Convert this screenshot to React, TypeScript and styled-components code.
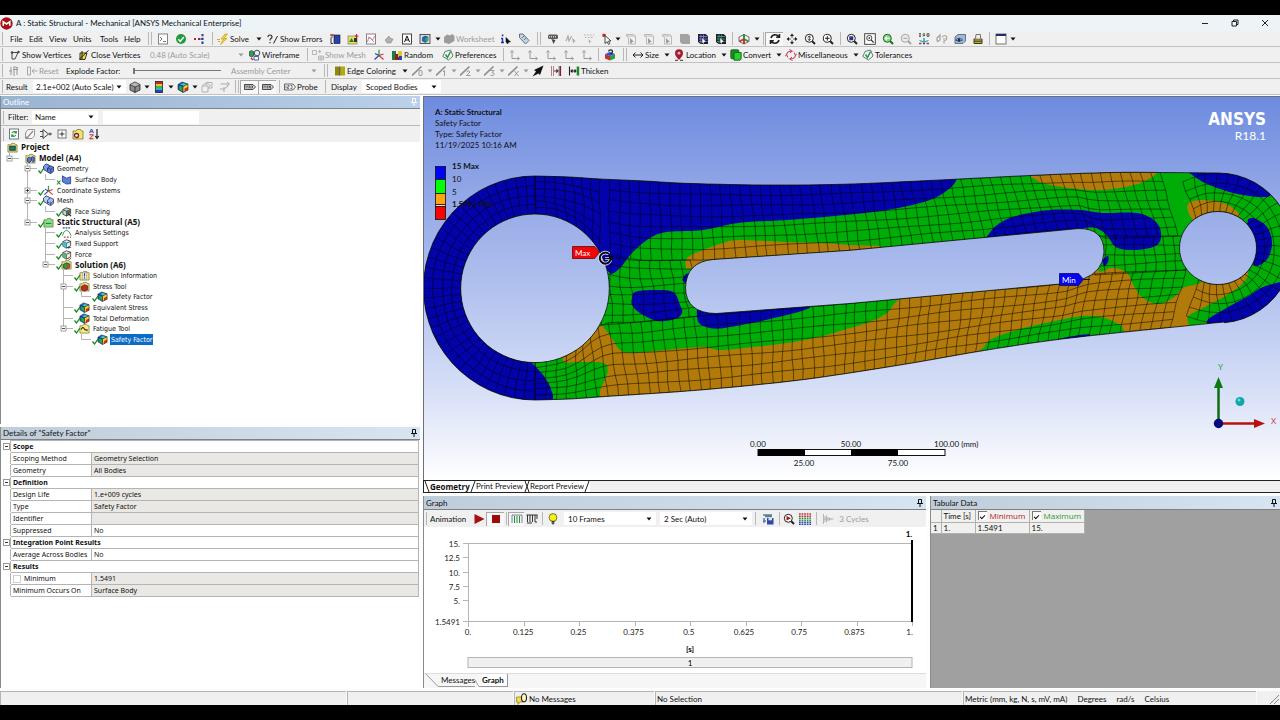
import React from 'react';
import styled, { createGlobalStyle, css } from 'styled-components';

const UI = `Lato, "Open Sans", sans-serif`;
const STRONG = `"Open Sans", "Noto Sans", sans-serif`;
const NARROW = `"DejaVu Sans Condensed", "DejaVu Sans", sans-serif`;
const GRID = `"Noto Sans", "Open Sans", sans-serif`;
const INK = '#101010';
const DIM = '#9b9b9b';

const GlobalStyle = createGlobalStyle`
  *, *::before, *::after { box-sizing: border-box; }
  html, body { margin: 0; padding: 0; }
  body { background: #000; color: ${INK}; font: 8px/10px ${UI}; }
  button, input, select { font: inherit; color: inherit; border: 0; padding: 0; margin: 0; background: none; border-radius: 0; }
  button { cursor: default; text-align: left; white-space: nowrap; }
  svg { display: block; flex: none; }
`;

/* ---------- icons ---------- */

const box = (fill: string, stroke = '#222') => (
  <>
    <path d="M2 4l4-2 4.500 1.500v5L6 11 2 9z" fill={fill} stroke={stroke} strokeWidth=".8" />
    <path d="M2 4l4 1.700 4.500-2M6 5.700V11" fill="none" stroke={stroke} strokeWidth=".8" />
  </>
);
const lens = (fill: string, stroke = '#222', extra: React.ReactNode = null) => (
  <>
    <path d="M8 8l3 3" stroke={stroke} strokeWidth="2" />
    <circle cx="5.300" cy="5.300" r="4" fill={fill} stroke={stroke} strokeWidth="1" />
    {extra}
  </>
);
const rainbow = (
  <>
    <path d="M1 3.500L5 1l6 2v6l-5 2.500-5-3z" fill="#1d62c9" />
    <path d="M3.500 3.500l3-1.300 4 1-2.500 2z" fill="#35d0c0" />
    <path d="M6 5.500l5-2.500v5.500L6 11.500z" fill="#ffd21f" />
    <path d="M7.500 7.500L11 6v2.500l-3.500 2z" fill="#e32b13" />
    <path d="M2.500 5l3 1v4l-3-1.500z" fill="#2ba82f" />
    <path d="M1 3.500L5 1l6 2v6l-5 2.500-5-3zM1 3.500l5 2L11 3M6 5.500v6" fill="none" stroke="#123" strokeWidth=".6" />
  </>
);
const folder = (fill: string, inner: React.ReactNode = null) => (
  <>
    <path d="M1 3h3l1-1.500h3.500L9.500 3H11v8H1z" fill={fill} stroke="#6b6425" strokeWidth=".7" />
    {inner}
  </>
);
const page = (stroke: string, inner: React.ReactNode) => (
  <>
    <rect x="1.500" y="1" width="9" height="10" fill="#fff" stroke={stroke} strokeWidth=".9" />
    {inner}
  </>
);
const axisL = (
  <path d="M3 2v7.500h7M1.500 3.500L3 1.500l1.500 2M8.500 8l2 1.500-2 1.500" fill="none" stroke="#9a9a9a" strokeWidth="1" />
);
const edgeMark = (m: React.ReactNode) => (
  <>
    <path d="M0 10.500L9.500 1.500" stroke="#8e8e8e" strokeWidth="1.700" />
    <g stroke="#8e8e8e" strokeWidth=".9" fill="none">{m}</g>
  </>
);
const dimCube = (
  <>
    <path d="M1.500 3V1.500h7L10.500 3v8h-7V4.500L1.500 3h8.500" fill="none" stroke="#b4b4b4" strokeWidth=".9" />
    <path d="M5 5l4 4H7.200l-.8 1.800L5 9.500z" fill="#9c9c9c" />
  </>
);
const meshCube = (front: string) => (
  <>
    <path d="M1 1h7.500L11 3v8H3.500L1 9z" fill="#1c2038" />
    <path d="M2 3.500h8.500M2 6h8.500M2 8.500h8.500M4 1.500v9M6.500 1.500v9" stroke={front} strokeWidth=".9" />
    <path d="M5 4.500L9.500 9H7.500l-.9 2L5 9.500z" fill="#fff" stroke="#111" strokeWidth=".5" />
  </>
);

const art: Record<string, React.ReactNode> = {
  app: (
    <>
      <circle cx="6" cy="6" r="5.700" fill="#a80f17" />
      <path d="M3 8V4.500l3 2 3-2V8" fill="none" stroke="#fff" strokeWidth="1.500" />
    </>
  ),
  script: page('#777', <path d="M3 4l2 2-2 2M6 8.500h3" fill="none" stroke="#666" strokeWidth=".9" />),
  ok: (
    <>
      <circle cx="6" cy="6" r="5" fill="#1f9a3c" />
      <path d="M3.300 6.200L5.300 8.300 8.800 4" fill="none" stroke="#fff" strokeWidth="1.500" />
    </>
  ),
  connect: (
    <>
      <path d="M1 6h3M5 6h2.500" stroke="#b22" strokeWidth="1.800" strokeDasharray="2 1" />
      <path d="M9.500 1v10" stroke="#223a9c" strokeWidth="2" strokeDasharray="2.300 1.500" />
      <path d="M6 6h4" stroke="#223a9c" strokeWidth="1" />
    </>
  ),
  bolt: (
    <>
      <path d="M8 1L4 6h2.500L3.500 11.500 10 5.500H7L10.500 1z" fill="#ffd61e" stroke="#a98200" strokeWidth=".5" />
      <path d="M0 6.500h3M1 8.500h2" stroke="#c89b00" strokeWidth=".8" />
    </>
  ),
  errors: (
    <>
      <path d="M1 4Q1 2 3 2T5 4Q5 5 3.900 5.600T3 7.500M3 9v1.300" fill="none" stroke="#222" strokeWidth="1.100" />
      <path d="M6.500 10.500L10.500 3" stroke="#222" strokeWidth="1" />
    </>
  ),
  report: (
    <>
      <rect x="5" y="2" width="6" height="8.500" fill="#2541b5" stroke="#111" strokeWidth=".6" />
      <path d="M1 2h4M2 4.500v6h2" stroke="#333" fill="none" strokeWidth="1" />
      <path d="M3 1v4" stroke="#c22" strokeWidth="1" />
    </>
  ),
  images: (
    <>
      <rect x="1" y="3" width="9" height="8" fill="#e5e35c" stroke="#666" strokeWidth=".6" />
      <path d="M2 9l2.500-4L7 9" fill="#3a7a33" />
      <path d="M7 5h3v4H7z" fill="#333" />
      <path d="M9.500 1v4M8 3h3.500" stroke="#c22" strokeWidth="1" />
    </>
  ),
  chartRed: page('#777', <path d="M2.500 9Q4 2 6 5.500T9.500 3M3 4q3 1 6 5" fill="none" stroke="#c46a8b" strokeWidth=".9" />),
  dimTool: <path d="M2 7l4-4 1 2 3 1-2 4H4z" fill="#b0b0b0" stroke="#8c8c8c" strokeWidth=".6" />,
  letter: page('#333', <path d="M3.500 9L6 3l2.500 6M4.500 7h3" fill="none" stroke="#111" strokeWidth="1" />),
  globe: (
    <>
      <rect x="1" y="1.500" width="10" height="9" fill="#cfdcf0" stroke="#333" strokeWidth=".8" />
      <path d="M3.500 4.500l2.500-1.500 3 1v3.500L6.500 9.500l-3-1.500z" fill="#2563c9" stroke="#123" strokeWidth=".5" />
      <path d="M6.500 5.500L9 4v3.500L6.500 9.500z" fill="#33b04a" />
    </>
  ),
  sheet: <path d="M1 4L4 1.500 7 2.500 9 1l2.500 2v5L6 11 1 9.500z" fill="#9b9b9b" />,
  info: (
    <>
      <path d="M2.500 5v4.500M1 9.500h3M1 5.500h1.500" stroke="#1d2fb5" strokeWidth="1.400" />
      <rect x="1.800" y="1.500" width="1.600" height="1.800" fill="#1d2fb5" />
      <path d="M6 4.500l4.500 4.500H8.500l-.8 2L6 9z" fill="#111" stroke="#111" strokeWidth=".6" />
    </>
  ),
  tag: (
    <>
      <path d="M1.500 1h3.500l6 6.500L7.500 11l-6-6.500z" fill="#c5d4e6" stroke="#456" strokeWidth=".8" />
      <path d="M4 5l2-2M6 7l2-2" stroke="#456" strokeWidth=".8" />
    </>
  ),
  wrench: (
    <>
      <rect x="1" y="1.500" width="10" height="4.500" rx="1.500" fill="#5a5a5a" />
      <path d="M2.500 3v1.500M4.500 3v1.500M6.500 3v1.500M8.500 3v1.500" stroke="#ddd" strokeWidth=".9" />
      <path d="M4.500 6l4 1-2 4z" fill="#444" />
    </>
  ),
  dimPick: (
    <>
      <path d="M1 8l2-5 1 5 2.500-5" fill="none" stroke="#aaa" strokeWidth="1.200" />
      <path d="M7 4.500l4 4H9L8.200 11z" fill="#aaa" />
    </>
  ),
  dimDots: (
    <>
      <path d="M1 2h10M2 4.500h8" stroke="#aaa" strokeWidth="1.200" strokeDasharray="1.500 1.500" />
      <path d="M5.500 6l3 3H7l-.8 2z" fill="#aaa" />
    </>
  ),
  pick: (
    <>
      <rect x="1.500" y=".8" width="3" height="3" fill="#c22" />
      <path d="M4 2.500l6 5.500H7.500l1.300 2.700-1.400.6-1.200-2.700L4 10.500z" fill="#fff" stroke="#222" strokeWidth=".8" />
    </>
  ),
  selV: dimCube,
  selB: <path d="M1 1h8l2 2v8H3L1 9z" fill="#a2a2a2" />,
  selN: meshCube('#8480d8'),
  selE: meshCube('#3f9a5c'),
  triad: (
    <>
      <path d="M1 4l5-2.500L11 4v4.500L6 11 1 8.500z" fill="#f4f4f4" stroke="#333" strokeWidth=".7" />
      <path d="M6 6V1M6 6l4.500 2.500" stroke="#1e9b35" strokeWidth="2" />
      <path d="M6 6L1.500 8.500M6 6v5" stroke="#cf2f2f" strokeWidth="2" />
    </>
  ),
  rotate: (
    <path d="M2 5Q3 1.800 6 1.800T9.700 4M10.500 1v3.300H7.200M10 7Q9 10.200 6 10.200T2.300 8M1.500 11V7.700h3.300" fill="none" stroke="#222" strokeWidth="1.600" />
  ),
  pan: (
    <>
      <path d="M6 2v8M2 6h8" stroke="#333" strokeWidth="1" strokeDasharray="2.700 2.600" />
      <path d="M6 .5L8 3H4zM6 11.500L4 9h4zM.5 6L3 4v4zM11.500 6L9 8V4z" fill="#222" />
    </>
  ),
  zoom: lens('#fff', '#222', <path d="M5.300 3v4.500M3.700 4.500L5.300 3l1.600 1.500M3.700 6l1.600 1.500L6.900 6" fill="none" stroke="#222" strokeWidth=".8" />),
  zoomPlus: lens('#fff', '#222', <path d="M3 5.300h4.600M5.300 3v4.600" stroke="#222" strokeWidth="1" />),
  zoomFit: lens('#fff', '#222', <rect x="3.300" y="3.300" width="4" height="4" fill="#2a3384" />),
  zoomBox: (
    <>
      <rect x=".7" y=".7" width="10.600" height="10.600" fill="#fff" stroke="#333" strokeWidth=".9" />
      <circle cx="5.300" cy="5" r="2.600" fill="#fff" stroke="#333" strokeWidth=".9" />
      <path d="M7.200 7l2.500 2.700M5.300 4v2" stroke="#333" strokeWidth="1.200" />
    </>
  ),
  zoomGreen: lens('#7fdc7f', '#1c6a24', <path d="M7.500 5.300h-4M5 3.700L3.300 5.300 5 7" fill="none" stroke="#fff" strokeWidth="1.200" />),
  zoomDim: lens('#ececec', '#a2a2a2', <path d="M3.300 5.300h4" stroke="#a2a2a2" strokeWidth="1" />),
  iso: (
    <>
      <path d="M1 .7h2M2 .7v2.600M1 3.300h2M7 1q-2-.8-2 .3t1.700.9-2 .9M9 .7h2v2.600H9z" fill="none" stroke="#333" strokeWidth=".8" />
      <path d="M6 5v4" stroke="#2a9b3c" strokeWidth="1.300" />
      <path d="M1.500 7.500L6 9l4.500-1.500" fill="none" stroke="#2ba0b8" strokeWidth="1.200" />
      <path d="M1 10.500h2.500M8.500 10.500H11" stroke="#c43333" strokeWidth="1.500" />
      <path d="M5 10.500h2" stroke="#2a42b8" strokeWidth="1.500" />
    </>
  ),
  lookDim: <path d="M1 8V5l3-3v5L1 9M6 4q3.500-3 4.500 0T8 8v2.500M7 6h2" fill="none" stroke="#a2a2a2" strokeWidth="1.200" />,
  eye: (
    <>
      <path d="M1 4l3-2.500h7.500V8L9 10.500H1z" fill="#9fb8d6" stroke="#45627f" strokeWidth=".8" />
      <path d="M1.500 7q3.500-3.500 7 0-3.500 3-7 0z" fill="#dde8f5" stroke="#1c2c4a" strokeWidth=".8" />
      <circle cx="5" cy="7" r="1.500" fill="#1c2c4a" />
    </>
  ),
  stack: (
    <>
      <rect x="1.500" y="5.500" width="9" height="5.500" rx="1" fill="#3c3a1c" />
      <path d="M2.500 7h7M2.500 9.200h7" stroke="#d9cf3c" strokeWidth="1.100" />
      <path d="M3.500 5.500L4 1.500h4.500v4" fill="#eee" stroke="#666" strokeWidth=".9" />
    </>
  ),
  windowIcon: (
    <>
      <rect x="1" y="1" width="10" height="10" fill="#fff" stroke="#555" strokeWidth=".8" />
      <rect x="1" y="1" width="10" height="2" fill="#222c66" />
    </>
  ),
  vertices: (
    <>
      <path d="M3 10V3.500h6.500M3 10h3l3-6.500" fill="none" stroke="#333" strokeWidth=".9" />
      <circle cx="3" cy="3.500" r="1.200" fill="#444" />
      <circle cx="9.500" cy="3" r="1.200" fill="#444" />
    </>
  ),
  closeV: (
    <>
      <path d="M2 4h7l-2 6.500H2z" fill="#f0dc3e" stroke="#222" strokeWidth=".9" />
      <path d="M1 10.500L10.500 1.500M4 2v8" stroke="#222" strokeWidth="1" />
    </>
  ),
  wire: (
    <>
      <path d="M0 3l2.500-1.500L5 3v3.500L2.500 8 0 6.500z" fill="#3e9950" stroke="#143" strokeWidth=".7" />
      <path d="M2 9l2 2" stroke="#b33" strokeWidth="1.500" />
      <circle cx="8" cy="4" r="2.800" fill="#e4f0f4" stroke="#223" strokeWidth=".8" />
      <path d="M5 7.500h4.500V11H5z" fill="#fff" stroke="#233a9c" strokeWidth=".8" />
    </>
  ),
  meshDim: (
    <>
      <path d="M.5 1.500h4v4h-4zM6.500 7h5v4h-5zM9 7v4M6.500 9h5" fill="none" stroke="#aaa" strokeWidth=".8" />
      <path d="M6 2.500h2.500M7 1l2 1.500-2 1.500" stroke="#aaa" fill="none" strokeWidth=".8" />
    </>
  ),
  axes: (
    <>
      <path d="M6 6.500V.8" stroke="#30a83e" strokeWidth="1.400" />
      <path d="M6 6.500L1.500 10.500M6 6.500L2 4.500" stroke="#2742b8" strokeWidth="1.200" />
      <path d="M6 6.500l4.500 4M6 6.500L10.500 5" stroke="#cc3b3b" strokeWidth="1.200" />
    </>
  ),
  random: (
    <>
      <rect x="1" y="2" width="4" height="9" fill="#1e7c3c" />
      <rect x="4" y="5" width="4" height="6" fill="#8a1f2a" />
      <rect x="7" y="2" width="4" height="6" fill="#e3c52a" />
      <rect x="8" y="7" width="3" height="4" fill="#2a3fae" />
    </>
  ),
  prefs: (
    <>
      <path d="M3 2.500L8.500 1l2.500 6-4.500 4L.8 7.500z" fill="#f1f8f3" stroke="#4c6f78" strokeWidth=".9" />
      <path d="M3.500 5.500L5.500 8.500 8.500 2.500" fill="none" stroke="#1f9a3c" strokeWidth="1.400" />
    </>
  ),
  axisL,
  cubeColor: (
    <>
      <path d="M1 5l5 2v4.500L1 9.500z" fill="#c92d2d" />
      <path d="M6 7l5-2v4.500l-5 2z" fill="#2d9e42" />
      <path d="M1 5l5-2 5 2-5 2z" fill="#2e54c8" />
      <path d="M4.500 2.500Q5 .8 6.700.8T8.500 2.400 7 4.500v.8" fill="none" stroke="#222" strokeWidth="1.300" />
    </>
  ),
  size: <path d="M1 6h10M3.500 3.500L1 6l2.500 2.500M8.500 3.500L11 6 8.500 8.500" fill="none" stroke="#222" strokeWidth="1" />,
  pin: (
    <>
      <path d="M6 .3q4 0 4 4Q10 7 6 11 2 7 2 4.300q0-4 4-4z" fill="#a31d2f" />
      <circle cx="6" cy="4.200" r="1.400" fill="#e8b8be" />
      <path d="M2 11.300h3M7 11.300h3" stroke="#333" strokeWidth="1" />
    </>
  ),
  convert: (
    <>
      <rect x=".8" y=".8" width="8" height="9" rx="1" fill="#1d8a26" stroke="#0d5312" strokeWidth=".8" />
      <path d="M4 4.500L5.500 3.500h5.700v6.500L10 11.200H4z" fill="#25d02f" stroke="#0d5312" strokeWidth=".8" />
    </>
  ),
  misc: (
    <>
      <path d="M1.500 6Q2 2.500 6 2M10.500 6Q10 9.500 6 10" fill="none" stroke="#c33b52" strokeWidth="1.100" />
      <path d="M4.500.5L7 2 5 4M7.500 11.500L5 10l2-2M9.300 4l1.200 2.500L12 4.500M2.700 8L1.500 5.500 0 7.500" fill="none" stroke="#c33b52" strokeWidth="1" />
      <path d="M7 2q2 .5 2.800 2.300M5 10Q3 9.500 2.200 7.700" fill="none" stroke="#c33b52" strokeWidth=".8" strokeDasharray="1 .8" />
    </>
  ),
  explodeDim: (
    <>
      <path d="M3 2v8M6 1v10M9 3v7" stroke="#b0b0b0" strokeWidth="1.400" />
      <path d="M1 6h3M5 4.500h5M7 2l3 1" stroke="#999" strokeWidth="1.200" />
    </>
  ),
  resetDim: <path d="M1.500 2h3v8h-3zM11.500 6H6M8.500 3.500L6 6l2.500 2.500" fill="none" stroke="#a8a8a8" strokeWidth="1" />,
  edge: (
    <>
      <rect x="1" y="1.500" width="4.500" height="9" fill="#8b8a0c" />
      <rect x="6" y="1.500" width="5" height="9" fill="#b0a910" />
      <path d="M5.700 1.500v9" stroke="#333" strokeWidth=".8" />
    </>
  ),
  e0: edgeMark(<rect x="7" y="5.500" width="3" height="5" rx="1" />),
  e1: edgeMark(<path d="M7 7l1.500-1.500v5.500" />),
  e2: edgeMark(<path d="M6.500 7q2-2.500 3.500 0L6.500 10.500h4" />),
  e3: edgeMark(<path d="M6.500 5.500h3.500L8 7.500q2.500 0 2 2t-3.500.7" />),
  ex: edgeMark(<path d="M6.500 6l4 5M10.500 6l-4 5" />),
  arrowNE: <path d="M.5 11.500l3.500-5-2-1.500L11.500.5 8 10 6.500 8.500z" fill="#111" />,
  gapIcon: (
    <>
      <path d="M1.500 1v10M3.500 1v10" stroke="#b08088" strokeWidth="1" />
      <path d="M4 6h4M6.300 4.300L8 6 6.300 7.700M10.500 1v10" fill="none" stroke="#7a2030" strokeWidth="1.200" />
      <path d="M9.200 1v10" stroke="#333" strokeWidth=".8" />
    </>
  ),
  thick: (
    <>
      <path d="M1.500 1.500v9M3 6h5M4.500 4.500L3 6l1.500 1.500M6.500 4.500L8 6 6.500 7.500" fill="none" stroke="#222" strokeWidth="1.100" />
      <rect x="8.700" y="1.500" width="2.500" height="9" fill="#1f8a2c" />
    </>
  ),
  cubeGray: (
    <>
      <path d="M1 3.500L6 1l5 2.500v5.500L6 11.500 1 9z" fill="#8c8c8c" stroke="#222" strokeWidth=".8" />
      <path d="M1 3.500L6 6l5-2.500M6 6v5.500" fill="none" stroke="#222" strokeWidth=".8" />
      <path d="M1.400 3.500L6 1.400l4.600 2.100L6 5.600z" fill="#b8b8b8" />
    </>
  ),
  bands: (
    <>
      <rect x="2.500" y=".5" width="7" height="2.500" fill="#c22" />
      <rect x="2.500" y="3" width="7" height="2" fill="#e6c82b" />
      <rect x="2.500" y="5" width="7" height="2" fill="#3eb548" />
      <rect x="2.500" y="7" width="7" height="2" fill="#2cb6c4" />
      <rect x="2.500" y="9" width="7" height="2.500" fill="#2540c2" />
      <rect x="2.500" y=".5" width="7" height="11" fill="none" stroke="#222" strokeWidth=".8" />
    </>
  ),
  rainbow,
  exportDim: <path d="M1 5h6v6H1zM1 5l2-2h4.500M5 3V1.500h6V7H7M7.500 3.500l2 1-2 1.500" fill="none" stroke="#aaa" strokeWidth=".9" />,
  flowDim: <path d="M1.500 3h8.500M8 1l2.500 2L8 5M1 8h4l4-3M5 6v5" fill="none" stroke="#aaa" strokeWidth="1" />,
  probe: (
    <>
      <path d="M.5 3h8.500l2.500 3L9 9H.5z" fill="#f4f4f4" stroke="#444" strokeWidth=".8" />
      <path d="M2 4.500v3M3.500 4.500h1.500v1.500H3.500v1.500h1.500M6.500 4.500H8v3H6.500" stroke="#444" strokeWidth=".7" fill="none" />
    </>
  ),
  maxTag: (
    <>
      <path d="M.5 3.500h8.500L11.500 6 9 8.500H.5z" fill="#ddd" stroke="#222" strokeWidth=".8" />
      <path d="M2 7.500v-3l1 1 1-1v3M5 7.500l.8-3 .8 3M7.500 4.500l1.500 3M9 4.500l-1.500 3" stroke="#222" strokeWidth=".6" fill="none" />
    </>
  ),
  minTag: (
    <>
      <path d="M.5 3.500h8.500L11.500 6 9 8.500H.5z" fill="#ddd" stroke="#222" strokeWidth=".8" />
      <path d="M2 7.500v-3l1 1 1-1v3M5.500 4.500v3M7 7.500v-3l1.500 3v-3" stroke="#222" strokeWidth=".6" fill="none" />
    </>
  ),
  refresh: page('#667', <path d="M4 5q2-2.500 4-.5M8 7q-2 2.500-4 .5M8.300 3v2H6.500M3.700 9V7h1.800" fill="none" stroke="#1f9a3c" strokeWidth="1.100" />),
  pagesDim: (
    <>
      <path d="M4 1.500h6.500V8L8 10.500H1.500V5z" fill="#f6f6f6" stroke="#8c8c8c" strokeWidth=".9" />
      <path d="M1.500 8.500L3 10l6-7" fill="none" stroke="#8c8c8c" strokeWidth="1.200" />
    </>
  ),
  expand: <path d="M0 3.500h3M0 8.500h3M3 1.500v9l5.500-4.500zM8.500 6H12M10 4.500v3" fill="none" stroke="#333" strokeWidth=".9" />,
  plusBox: (
    <>
      <rect x="2" y="2" width="8" height="8" fill="#fff" stroke="#555" strokeWidth=".8" />
      <path d="M3.500 6h5M6 3.500v5" stroke="#222" strokeWidth=".9" />
    </>
  ),
  hiddenFolder: folder('#efe56f', <circle cx="4.500" cy="7.500" r="2" fill="#fff" stroke="#7a1d1d" strokeWidth="1.300" />),
  sort: (
    <>
      <path d="M1.500 5L3.500 1l2 4M2.300 3.800h2.400" fill="none" stroke="#2a42b8" strokeWidth="1" />
      <path d="M1.500 6.800h4l-4 4h4" fill="none" stroke="#b22" strokeWidth="1" />
      <path d="M9 1v9M7.300 8L9 10.500 10.700 8" fill="none" stroke="#222" strokeWidth="1.200" />
    </>
  ),
  play: <path d="M1.500 1l10 5-10 5z" fill="#a80f0f" />,
  stop: <rect x="2" y="2" width="8" height="8" fill="#9c0b0b" />,
  barsG: (
    <>
      <path d="M1 10V2h10v8" fill="#eef8ee" stroke="#567" strokeWidth=".8" />
      <path d="M3.500 3v7M6 3v7M8.500 3v7" stroke="#2b8f3f" strokeWidth="1" />
    </>
  ),
  bars: <path d="M.5 2h11M1.500 2v7M4 2v7M6.500 2v7M9 2v7M11 2v4M1 10h5M10 10V8" stroke="#333" strokeWidth="1" fill="none" />,
  bulb: (
    <>
      <circle cx="6" cy="4.500" r="3.900" fill="#f7f01a" stroke="#5c5a10" strokeWidth=".8" />
      <path d="M4.500 8.500h3M4.500 10h3M6 8v3.500" stroke="#333" strokeWidth="1.200" />
    </>
  ),
  saveVideo: (
    <>
      <path d="M1 2h9M3 3.500h7M2 5v5M1 8h3" stroke="#5e7e98" strokeWidth="1.500" />
      <rect x="5" y="5" width="6.500" height="6.500" fill="#2a49a8" />
      <rect x="6.500" y="5" width="3.500" height="2.300" fill="#dfe8f8" />
    </>
  ),
  zoomPlay: lens('#fff', '#222', <path d="M3.500 3L8 5.300 3.500 7.600z" fill="#b31313" />),
  grid: (
    <g strokeWidth="1.500" strokeDasharray="1.700 .9">
      <path d="M0 1h12M0 3.200h12" stroke="#c42b3c" />
      <path d="M0 5.300h12M0 7.300h12" stroke="#2b9a3c" />
      <path d="M0 9.300h12M0 11.300h12" stroke="#2b3fb0" />
    </g>
  ),
  cyclesDim: <path d="M1.500 1v10M3 3v6M4.500 2.500v7M6 4v4M7.500 4.500v3M9 5.500v1M1 6h10.500" stroke="#b5b5b5" strokeWidth="1" />,
  note: (
    <>
      <path d="M.5 4h7v5H4l-2 2.500V9H.5z" fill="#f0dd4e" stroke="#8a7a10" strokeWidth=".7" />
      <ellipse cx="8" cy="4.700" rx="2.500" ry="4" fill="#fff8c0" stroke="#222" strokeWidth="1.100" />
    </>
  ),
  project: folder('#d8e08a', <rect x="3" y="4.500" width="6" height="4.500" fill="#1d7a5c" stroke="#123" strokeWidth=".8" />),
  model: folder('#e8e08c', <path d="M2.500 6l2-1.500L7 6v2.500l-2.500 2-2-1.500zM6.500 5l2-1 1.500 1v4L8 10" fill="#5c7ad8" stroke="#182c6b" strokeWidth=".9" />),
  geometry: (
    <>
      <path d="M.5 3.500L3.500 1l3.500 1.500v4L4 9 .5 7z" fill="#7c9ae6" stroke="#1a2a66" strokeWidth=".9" />
      <path d="M5 5.500L8 3l3.500 1.500v4.500l-3 2.500L5 10z" fill="#5f80d8" stroke="#1a2a66" strokeWidth=".9" />
      <path d="M5 5.500L8.500 7l3-2.500M8.500 7v4.500" fill="none" stroke="#1a2a66" strokeWidth=".7" />
    </>
  ),
  surface: <path d="M1.500 2L6 4.500 10.500 3v7.500L6 11 1.500 8.500z" fill="#5c80dc" stroke="#1c3078" strokeWidth=".8" />,
  meshT: (
    <>
      <path d="M.5 3.500L3.500 1l3.500 1.500v4L4 9 .5 7z" fill="#bccbf2" stroke="#1a2a66" strokeWidth=".9" />
      <path d="M5 5.500L8 3l3.500 1.500v4.500l-3 2.500L5 10zM5 8l3.500 1 3-2.500M8.500 7v4.500" fill="#a8bcf0" stroke="#1a2a66" strokeWidth=".8" />
    </>
  ),
  sizing: (
    <>
      {box('#c8d8d0')}
      <path d="M6 5.700l4-1.700v4L6 10z" fill="#4c6f50" />
      <path d="M8 8.500l3 2.500" stroke="#222" strokeWidth="1.300" />
    </>
  ),
  structural: folder('#7fe08a', <path d="M3 7h6" stroke="#1f7a2c" strokeWidth="1.100" />),
  settings: (
    <>
      <path d="M2 1h9" stroke="#2a42b8" strokeWidth="1.400" strokeDasharray="2 1" />
      <path d="M1.500 9.500Q3 3.500 6 3.500t5 6" fill="none" stroke="#2b9a3c" strokeWidth="1" />
      <path d="M3 11h8" stroke="#c33" strokeWidth="1.200" strokeDasharray="2 1.500" />
    </>
  ),
  support: (
    <>
      {box('#d8eef4')}
      <path d="M2 4l4 1.700V11L2 9z" fill="#3cc2d8" />
      <path d="M7 10.500h4M8 11.500l1-2" stroke="#222" strokeWidth=".8" />
    </>
  ),
  force: (
    <>
      {box('#e4efe6')}
      <path d="M2 4l4 1.700V11L2 9z" fill="#6fae78" />
      <path d="M8 10.500l1.500 1 1.500-2" stroke="#b22" fill="none" strokeWidth="1" />
    </>
  ),
  solution: folder('#e8e08c', (
    <>
      <path d="M2.500 6L6 4l3.500 1.500V9.500L6 11l-3.500-1.500z" fill="#2c9a40" stroke="#123" strokeWidth=".7" />
      <path d="M6 7l3.500-1.500v4L6 11z" fill="#c8471e" />
    </>
  )),
  solInfo: folder('#f5ea80', (
    <>
      <rect x="3.500" y="2.500" width="5" height="7.500" fill="#fff" stroke="#886" strokeWidth=".6" />
      <path d="M6 3.500v3.500M6 8v1.300" stroke="#223aa8" strokeWidth="1.500" />
    </>
  )),
  stress: folder('#e8e08c', <path d="M2.500 6L6 4l3.500 1.500V9.500L6 11l-3.500-1.500z" fill="#c22a1a" stroke="#411" strokeWidth=".7" />),
  fatigue: folder('#f5ea80', <path d="M2.500 7Q4 3.500 5.500 6T9.500 7.500" fill="none" stroke="#222" strokeWidth="1.200" />),
};

const Icon = ({ name, size = 12 }: { name: string; size?: number }) => (
  <svg width={size} height={size} viewBox="0 0 12 12" aria-hidden="true">{art[name]}</svg>
);

const Caret = ({ dim = false }: { dim?: boolean }) => (
  <svg width="6" height="4" viewBox="0 0 6 4" aria-hidden="true">
    <path d="M.5.500h5L3 3.500z" fill={dim ? '#9a9a9a' : '#111'} />
  </svg>
);

/* ---------- shell ---------- */

const Shell = styled.div`
  display: flex;
  flex-direction: column;
  min-width: 1040px;
  min-height: 100vh;
  padding: 15px 0;
  background: #000;
`;
const TitleBar = styled.header`
  display: flex;
  align-items: center;
  height: 16px;
  background: #edf4f8;
`;
const TitleText = styled.h1`
  flex: 1;
  margin: 0 0 0 3px;
  font: 8px/10px ${UI};
`;
const WindowButton = styled.button`
  width: 30px;
  height: 14px;
  display: grid;
  place-items: center;
`;
const Bar = styled.div`
  display: flex;
  align-items: center;
  height: 16px;
  background: #f0f0f0;
  border-bottom: 1px solid #c2c2c2;
`;
const Grip = styled.span<{ $w?: number }>`
  flex: none;
  width: ${p => p.$w ?? 10}px;
  height: 13px;
  padding-left: 2px;
  &::before { content: ''; display: block; width: 1px; height: 100%; background: #b5b5b5; }
`;
const Sep = styled.span<{ $w: number; $double?: boolean }>`
  flex: none;
  width: ${p => p.$w}px;
  height: 13px;
  display: flex;
  justify-content: center;
  &::before {
    content: '';
    width: ${p => (p.$double ? 4 : 1)}px;
    border: solid #b8b8b8;
    border-width: 0 ${p => (p.$double ? 1 : 0)}px 0 1px;
  }
`;
const Space = styled.span<{ $w: number }>`
  flex: none;
  width: ${p => p.$w}px;
`;
const Tool = styled.button<{ $w: number; $dim?: boolean; $on?: boolean }>`
  flex: none;
  display: flex;
  align-items: center;
  justify-content: center;
  width: ${p => p.$w}px;
  height: 14px;
  color: ${p => (p.$dim ? DIM : INK)};
  ${p => p.$on && css`
    background: #f8f8f8;
    border: solid #a8a8a8;
    border-width: 1px 0 0 1px;
  `}
`;
const Labelled = styled(Tool)`
  justify-content: flex-start;
  gap: 1px;
  padding-left: 1px;
`;
const MenuButton = styled.button<{ $w: number }>`
  flex: none;
  width: ${p => p.$w}px;
`;
const BarLabel = styled.label<{ $w: number }>`
  flex: none;
  width: ${p => p.$w}px;
  padding-left: 3px;
  white-space: nowrap;
`;
const ComboFrame = styled.span<{ $w: number; $flat?: boolean }>`
  flex: none;
  display: grid;
  align-items: center;
  width: ${p => p.$w}px;
  height: 13px;
  background: ${p => (p.$flat ? 'transparent' : '#fff')};
  & > * { grid-area: 1 / 1; }
  & > svg { justify-self: end; margin-right: 4px; pointer-events: none; }
`;
const ComboSelect = styled.select<{ $pad: number; $dim?: boolean }>`
  appearance: none;
  width: 100%;
  height: 13px;
  padding-left: ${p => p.$pad}px;
  color: ${p => (p.$dim ? DIM : INK)};
  opacity: 1;
`;
const Combo = ({ id, value, w, pad = 4, dim = false, label }: { id?: string; value: string; w: number; pad?: number; dim?: boolean; label?: string }) => (
  <ComboFrame $w={w} $flat={dim}>
    <ComboSelect id={id} $pad={pad} $dim={dim} disabled={dim} aria-label={label}>
      <option>{value}</option>
    </ComboSelect>
    <Caret dim={dim} />
  </ComboFrame>
);
const Slider = styled.input`
  appearance: none;
  width: 88px;
  height: 12px;
  margin: 0 4px 0 6px;
  background: linear-gradient(#777, #777) center / 100% 1px no-repeat;
  &::-webkit-slider-thumb { appearance: none; width: 2px; height: 6px; background: #777; }
`;

const T = ({ i, w = 18, dim, on }: { i: string; w?: number; dim?: boolean; on?: boolean }) => (
  <Tool $w={w} $dim={dim} $on={on} aria-label={i}><Icon name={i} /></Tool>
);
const L = ({ i, w, dim, children }: { i: string; w: number; dim?: boolean; children: React.ReactNode }) => (
  <Labelled $w={w} $dim={dim}><Icon name={i} />{children}</Labelled>
);
const C = ({ w = 8, dim }: { w?: number; dim?: boolean }) => (
  <Tool $w={w} aria-label="more"><Caret dim={dim} /></Tool>
);

const Toolbars = () => (
  <>
    <Bar as="nav">
      <Grip />
      <MenuButton $w={19}>File</MenuButton>
      <MenuButton $w={20}>Edit</MenuButton>
      <MenuButton $w={24}>View</MenuButton>
      <MenuButton $w={27}>Units</MenuButton>
      <MenuButton $w={24}>Tools</MenuButton>
      <MenuButton $w={22}>Help</MenuButton>
      <Sep $w={8} $double />
      <T i="script" /><T i="ok" /><T i="connect" />
      <Sep $w={8} />
      <L i="bolt" w={36}>Solve</L><C w={14} />
      <L i="errors" w={60}>Show Errors</L>
      <T i="report" /><T i="images" /><T i="chartRed" /><T i="dimTool" /><T i="letter" /><T i="globe" /><C />
      <L i="sheet" w={55} dim>Worksheet</L>
      <T i="info" /><T i="tag" />
      <Sep $w={11} $double />
      <T i="wrench" /><T i="dimPick" /><T i="dimDots" /><Space $w={2} /><T i="pick" w={14} /><C />
      <T i="selV" /><T i="selV" /><T i="selV" /><T i="selB" /><T i="selN" /><T i="selE" />
      <Sep $w={5} />
      <T i="triad" /><C />
      <Sep $w={4} />
      <T i="rotate" on /><T i="pan" /><T i="zoom" /><T i="zoomPlus" />
      <Sep $w={6} />
      <T i="zoomFit" /><T i="zoomBox" /><T i="zoomGreen" /><T i="zoomDim" /><T i="iso" /><T i="lookDim" /><T i="eye" /><T i="stack" />
      <Sep $w={5} />
      <T i="windowIcon" /><C w={6} />
    </Bar>
    <Bar>
      <Grip $w={8} />
      <L i="vertices" w={69}>Show Vertices</L>
      <L i="closeV" w={67}>Close Vertices</L>
      <Combo value="0.48 (Auto Scale)" w={104} pad={6} dim label="Vertex scale" />
      <L i="wire" w={56}>Wireframe</L>
      <Sep $w={7} />
      <L i="meshDim" w={59} dim>Show Mesh</L>
      <T i="axes" /><Space $w={2} />
      <L i="random" w={51}>Random</L>
      <L i="prefs" w={59}>Preferences</L>
      <Sep $w={6} />
      <T i="axisL" /><T i="axisL" /><T i="axisL" /><T i="axisL" /><T i="axisL" />
      <Sep $w={5} />
      <T i="cubeColor" />
      <Sep $w={12} $double />
      <L i="size" w={30}>Size</L><C w={11} />
      <L i="pin" w={47}>Location</L><C w={10} />
      <L i="convert" w={44}>Convert</L><C w={11} />
      <L i="misc" w={66}>Miscellaneous</L><C w={11} />
      <L i="prefs" w={60}>Tolerances</L>
    </Bar>
    <Bar>
      <Grip $w={5} />
      <T i="explodeDim" /><Space $w={2} />
      <L i="resetDim" w={38} dim>Reset</L>
      <BarLabel $w={64} htmlFor="explode">Explode Factor:</BarLabel>
      <Slider id="explode" type="range" min={0} max={10} defaultValue={0} />
      <Combo value="Assembly Center" w={96} pad={6} dim label="Explode centre" />
      <Sep $w={10} $double /><Space $w={2} />
      <L i="edge" w={67}>Edge Coloring</L><C w={9} />
      <T i="e0" /><C w={6} dim /><T i="e1" /><C w={6} dim /><T i="e2" /><C w={6} dim /><T i="e3" /><C w={6} dim /><T i="ex" /><C w={6} dim />
      <T i="arrowNE" /><T i="gapIcon" /><Space $w={2} />
      <L i="thick" w={60}>Thicken</L>
    </Bar>
    <Bar>
      <Grip $w={3} />
      <BarLabel $w={30} htmlFor="scale">Result</BarLabel>
      <Combo id="scale" value="2.1e+002 (Auto Scale)" w={93} pad={3} />
      <T i="cubeGray" /><C w={6} /><T i="bands" /><C w={6} /><T i="rainbow" /><C w={6} />
      <T i="exportDim" /><T i="flowDim" />
      <Sep $w={6} $double />
      <T i="maxTag" on /><T i="minTag" on />
      <Sep $w={7} />
      <L i="probe" w={40}>Probe</L>
      <Sep $w={5} />
      <BarLabel $w={34} htmlFor="display">Display</BarLabel>
      <Combo id="display" value="Scoped Bodies" w={79} />
    </Bar>
  </>
);

/* ---------- panels ---------- */

const Main = styled.main`
  flex: 1;
  display: grid;
  grid-template-columns: 420px minmax(0, 1fr);
  gap: 3px;
  padding: 1px 0 3px;
  background: #fdfdfd;
`;
const Column = styled.div`
  display: flex;
  flex-direction: column;
  gap: 3px;
  min-width: 0;
`;
const Panel = styled.section<{ $grow?: boolean }>`
  display: flex;
  flex-direction: column;
  min-width: 0;
  flex: ${p => (p.$grow ? 1 : 'none')};
  border-left: 1px solid #8a8a8a;
  background: #fff;
`;
const PanelHead = styled.div<{ $active?: boolean; $tall?: boolean }>`
  display: flex;
  align-items: center;
  justify-content: space-between;
  height: ${p => (p.$tall ? 14 : 13)}px;
  padding: 0 3px 0 2px;
  color: ${p => (p.$active ? '#fff' : INK)};
  background: ${p => (p.$active ? 'linear-gradient(90deg, #99b4d1, #b9d1ea)' : 'linear-gradient(90deg, #bfcddb, #d7e4f2)')};
  border-bottom: 1px solid #808080;
`;
const PanelTitle = styled.h2`
  margin: 0;
  font: 8px/10px ${UI};
`;
const PinButton = ({ light = false }: { light?: boolean }) => (
  <button aria-label="Pin panel">
    <svg width="6" height="8" viewBox="0 0 6 8">
      <path d="M1.500.500h3v4h-3zM0 4.500h6M3 4.500V8" fill="none" stroke={light ? '#fff' : '#111'} strokeWidth="1" />
    </svg>
  </button>
);
const FilterBar = styled.div`
  display: flex;
  align-items: center;
  height: 17px;
  background: #f0f0f0;
  border-bottom: 1px solid #b8b8b8;
`;
const TreeBar = styled(FilterBar)`
  height: 16px;
  border-bottom: 0;
`;
const FilterText = styled.input`
  width: 96px;
  height: 13px;
  margin-left: 5px;
  background: #fff;
`;

type Row = { t: string; icon: string; cells: string; bold?: boolean; check?: boolean; cross?: boolean; on?: boolean };

/* cells: one letter for each indent column. s blank, v line, t tee, e elbow, M minus box with line going on, P plus box, E last minus box */
const rows: Row[] = [
  { t: 'Project', icon: 'project', cells: '', bold: true },
  { t: 'Model (A4)', icon: 'model', cells: 'E', bold: true },
  { t: 'Geometry', icon: 'geometry', cells: 'sM', check: true },
  { t: 'Surface Body', icon: 'surface', cells: 'sve', cross: true },
  { t: 'Coordinate Systems', icon: 'axes', cells: 'sP', check: true },
  { t: 'Mesh', icon: 'meshT', cells: 'sM', check: true },
  { t: 'Face Sizing', icon: 'sizing', cells: 'sve', check: true },
  { t: 'Static Structural (A5)', icon: 'structural', cells: 'sE', bold: true, check: true },
  { t: 'Analysis Settings', icon: 'settings', cells: 'sst', check: true },
  { t: 'Fixed Support', icon: 'support', cells: 'sst', check: true },
  { t: 'Force', icon: 'force', cells: 'sst', check: true },
  { t: 'Solution (A6)', icon: 'solution', cells: 'ssE', bold: true, check: true },
  { t: 'Solution Information', icon: 'solInfo', cells: 'ssst', check: true },
  { t: 'Stress Tool', icon: 'stress', cells: 'sssM', check: true },
  { t: 'Safety Factor', icon: 'rainbow', cells: 'sssve', check: true },
  { t: 'Equivalent Stress', icon: 'rainbow', cells: 'ssst', check: true },
  { t: 'Total Deformation', icon: 'rainbow', cells: 'ssst', check: true },
  { t: 'Fatigue Tool', icon: 'fatigue', cells: 'sssE', check: true },
  { t: 'Safety Factor', icon: 'rainbow', cells: 'sssse', check: true, on: true },
];

const Tree = styled.ul`
  display: grid;
  grid-auto-rows: 1fr;
  height: 203px;
  margin: 0;
  padding: 0;
  list-style: none;
`;
const TreeRow = styled.li`
  display: flex;
  align-items: center;
  min-height: 0;
`;
const NodeButton = styled.button<{ $bold?: boolean; $on?: boolean }>`
  flex: none;
  display: block;
  padding: ${p => (p.$bold ? '0 1px' : '1px 1px 0')};
  font: ${p => (p.$bold ? `700 8px/10px ${STRONG}` : `400 7px/10px ${NARROW}`)};
  color: ${p => (p.$on ? '#fff' : INK)};
  background: ${p => (p.$on ? '#0a6cc4' : 'none')};
`;
const TreeCell = ({ k }: { k: string }) => {
  const boxed = k === 'M' || k === 'E' || k === 'P';
  return (
    <svg width="18" height="11" viewBox="0 0 18 11" aria-hidden="true">
      {k !== 's' && k !== 'v' && <path d="M8.500 5.500H18" stroke="#b4b4b4" />}
      {(k === 'v' || k === 't' || k === 'M' || k === 'P') && <path d="M8.500 0v11" stroke="#b4b4b4" />}
      {(k === 'e' || k === 'E') && <path d="M8.500 0v5.500" stroke="#b4b4b4" />}
      {boxed && <rect x="6" y="3" width="5" height="5" fill="#fff" stroke="#8a8a8a" strokeWidth=".8" />}
      {boxed && <path d={k === 'P' ? 'M7 5.500h3M8.500 4v3' : 'M7 5.500h3'} stroke="#222" strokeWidth=".8" />}
    </svg>
  );
};
const NodeIcon = ({ r }: { r: Row }) => (
  <svg width="19" height="11" viewBox="0 0 19 11" aria-hidden="true">
    <svg x="6" y="0" width="11" height="11" viewBox="0 0 12 12">{art[r.icon]}</svg>
    {r.check && <path d="M1.500 7.500l2 2.500 3.500-5" fill="none" stroke="#128a1c" strokeWidth="1.300" />}
    {r.cross && <path d="M2 6.500l3.500 4M5.500 6.500l-3.500 4" fill="none" stroke="#128a1c" strokeWidth="1.100" />}
  </svg>
);

const Outline = () => (
  <Panel $grow>
    <PanelHead $active><PanelTitle>Outline</PanelTitle><PinButton light /></PanelHead>
    <FilterBar>
      <Grip $w={4} />
      <BarLabel $w={27} htmlFor="filter">Filter:</BarLabel>
      <Combo id="filter" value="Name" w={66} pad={3} />
      <FilterText aria-label="Filter text" />
    </FilterBar>
    <TreeBar>
      <Grip $w={5} />
      <T i="refresh" w={16} /><T i="pagesDim" w={16} /><T i="expand" w={16} /><T i="plusBox" w={16} /><T i="hiddenFolder" w={16} /><T i="sort" w={16} />
    </TreeBar>
    <Tree>
      {rows.map((r, n) => (
        <TreeRow key={n}>
          {r.cells.split('').map((k, c) => <TreeCell key={c} k={k} />)}
          <NodeIcon r={r} />
          <NodeButton $bold={r.bold} $on={r.on}>{r.t}</NodeButton>
        </TreeRow>
      ))}
    </Tree>
  </Panel>
);

const DetailsPanel = styled(Panel)`
  height: 261px;
`;
const DetailTable = styled.table`
  width: 418px;
  border-collapse: collapse;
  table-layout: fixed;
  tr { height: 12px; }
  td, th {
    height: 12px;
    padding: 0 0 0 2px;
    border: 1px solid #b4b4b4;
    font: 7px/10px ${GRID};
    text-align: left;
    white-space: nowrap;
  }
`;
const Gutter = styled.td`
  && { width: 9px; padding: 0; border-color: #fff #b4b4b4 #fff #fff; background: #fff; }
`;
const Group = styled.th`
  && { font-weight: 700; }
`;
const Value = styled.td<{ $ro?: boolean }>`
  background: ${p => (p.$ro ? '#eae8e4' : '#fff')};
`;
const Toggle = styled.button`
  display: block;
  width: 7px;
  height: 7px;
  margin-left: 1px;
  border: 1px solid #9a9a9a;
  background: linear-gradient(#333, #333) center / 3px 1px no-repeat #fff;
`;
const Tick = styled.input`
  appearance: none;
  width: 8px;
  height: 8px;
  margin-right: 3px;
  border: 1px solid #cfcfcf;
  vertical-align: middle;
  background: #fff;
`;
type Detail = [string, string?, boolean?];
const details: Detail[] = [
  ['Scope'], ['Scoping Method', 'Geometry Selection', true], ['Geometry', 'All Bodies', true],
  ['Definition'], ['Design Life', '1.e+009 cycles', true], ['Type', 'Safety Factor', true], ['Identifier', '', true], ['Suppressed', 'No'],
  ['Integration Point Results'], ['Average Across Bodies', 'No'],
  ['Results'], ['Minimum', '1.5491', true], ['Minimum Occurs On', 'Surface Body', true],
];
const Details = () => (
  <DetailsPanel>
    <PanelHead><PanelTitle>Details of "Safety Factor"</PanelTitle><PinButton /></PanelHead>
    <DetailTable>
      <colgroup><col width="9" /><col width="81" /><col /></colgroup>
      <tbody>
        {details.map(([name, value, ro]) => (
          <tr key={name}>
            <Gutter>{value === undefined && <Toggle aria-label={`Collapse ${name}`} />}</Gutter>
            {value === undefined ? <Group colSpan={2}>{name}</Group> : (
              <>
                <td>{name === 'Minimum' ? <label><Tick type="checkbox" />{name}</label> : name}</td>
                <Value $ro={ro}>{value}</Value>
              </>
            )}
          </tr>
        ))}
      </tbody>
    </DetailTable>
  </DetailsPanel>
);

/* ---------- finite element part ---------- */

type P = [number, number];

/* Catmull-Rom sampling of a poly-line */
const sample = (pts: P[], t: number): P => {
  const n = pts.length - 1;
  const s = Math.min(Math.max(t, 0), 0.99999) * n;
  const i = Math.floor(s);
  const u = s - i;
  const at = (k: number) => pts[Math.min(Math.max(k, 0), n)];
  const f = (a: number, b: number, c: number, d: number) =>
    0.5 * (2 * b + (c - a) * u + (2 * a - 5 * b + 4 * c - d) * u * u + (3 * b - a - 3 * c + d) * u * u * u);
  const [a, b, c, d] = [at(i - 1), at(i), at(i + 1), at(i + 2)];
  return [f(a[0], b[0], c[0], d[0]), f(a[1], b[1], c[1], d[1])];
};
/* evenly spaced points along the curve */
const even = (pts: P[], n: number): P[] => {
  const fine: P[] = Array.from({ length: 401 }, (_, i) => sample(pts, i / 400));
  const len = [0];
  for (let i = 1; i < fine.length; i++) len.push(len[i - 1] + Math.hypot(fine[i][0] - fine[i - 1][0], fine[i][1] - fine[i - 1][1]));
  const total = len[400];
  let j = 0;
  return Array.from({ length: n + 1 }, (_, k) => {
    const want = (total * k) / n;
    while (j < 400 && len[j] < want) j++;
    return fine[j];
  });
};
const poly = (pts: P[]) => pts.map((p, i) => `${i ? 'L' : 'M'}${p[0].toFixed(1)} ${p[1].toFixed(1)}`).join('');
const smooth = (pts: P[]) => poly(Array.from({ length: pts.length * 8 + 1 }, (_, i) => sample(pts, i / (pts.length * 8))));
const arc = (cx: number, cy: number, rx: number, ry: number, a: number, b: number, n = 16): P[] =>
  Array.from({ length: n + 1 }, (_, i) => {
    const t = ((a + ((b - a) * i) / n) * Math.PI) / 180;
    return [cx + rx * Math.cos(t), cy + ry * Math.sin(t)];
  });
/* quad mesh between two curves */
const patch = (inner: P[], outer: P[], n: number, m: number, wobble = 1): string => {
  const a = even(inner, n);
  const b = even(outer, n);
  const g = a.map((p, i) => Array.from({ length: m + 1 }, (_, j): P => {
    const u = j / m;
    const k = j === 0 || j === m ? 0 : wobble;
    return [
      p[0] + (b[i][0] - p[0]) * u + k * Math.sin(i * 0.7 + j * 1.3),
      p[1] + (b[i][1] - p[1]) * u + k * Math.cos(i * 0.45 + j * 1.9),
    ];
  }));
  return g.map(poly).join('') + Array.from({ length: m + 1 }, (_, j) => poly(g.map(r => r[j]))).join('');
};

const topEdge: P[] = [[535, 176], [570, 177], [600, 179], [645, 181], [690, 183.5], [770, 185], [850, 184], [950, 179.5], [1030, 175.5], [1110, 172.5], [1160, 172.5], [1218, 173]];
const lowEdge: P[] = [[535, 400], [570, 399], [605, 396.5], [700, 390], [800, 380], [900, 365], [975, 352], [1050, 340.5], [1125, 332], [1170, 327.5], [1224, 322]];
const leftOuter = arc(535, 288, 111.5, 112, 90, 270, 30);
const rightOuter = arc(1218, 248, 75, 75, -90, 85, 24);
const body = `${poly([...even(topEdge, 60), ...rightOuter, ...even(lowEdge, 60).reverse(), ...leftOuter])}Z`;
const leftHole = `${poly(arc(535, 288.3, 74.3, 74.3, 0, 360, 72))}Z`;
const rightHole = `${poly(arc(1218, 248, 38.5, 36.5, 0, 360, 48))}Z`;
const slot = 'M713 259.500L850 250.300L1078 228.600Q1104 228 1104 252Q1103 272 1083 279Q1075 283 1060 284L850 303.500L716 313.500Q686 313 685.500 288Q686 262 713 259.500Z';

const mesh = [
  patch(arc(535, 288.3, 74.3, 74.3, 90, 270), arc(535, 288, 111.5, 112, 90, 270), 34, 4, 0.6),
  patch(arc(535, 288.3, 74.3, 74.3, 270, 330), topEdge.slice(0, 3), 7, 6, 1),
  patch([[610, 254], [640, 260], [690, 260], [713, 259.5], [850, 250.3], [960, 240], [1078, 228.6], [1105, 238], [1178, 236]], [[609, 179], ...topEdge.slice(3, 11)], 55, 7, 0.6),
  patch([[600, 252], [630, 260], [690, 260]], [[601, 325], [640, 322], [700, 316]], 9, 7, 1.2),
  patch([[535, 362.6], [570, 354], [601, 325], [640, 322], [700, 316], [850, 303.5], [960, 293], [1060, 284], [1095, 274], [1186, 270]], lowEdge.slice(0, 10), 62, 7, 0.7),
  patch([[1096, 236], [1182, 236]], [[1095, 275], [1186, 270]], 9, 4, 1),
  patch(arc(1218, 248, 38.5, 36.5, -125, 120), arc(1218, 248, 75, 75, -118, 115), 26, 4, 0.8),
].join('');

const blue: P[][] = [
  [[532, 363], [543, 375], [550.5, 388], [551.5, 402], [530, 420], [410, 380], [400, 180], [480, 150], [700, 160], [960, 160], [957, 178], [950, 188], [930, 200], [893, 209], [850, 214.5], [787, 220], [740, 222.7], [703, 230], [667, 232], [650, 238], [633, 252], [620, 268], [611, 274], [606, 270], [560, 240], [500, 240], [480, 330], [532, 363]],
  [[632, 298], [635, 292], [653, 290], [673, 292], [680, 305], [682, 313], [675, 319], [657, 321], [640, 313], [632, 305], [632, 298]],
  [[697, 308], [697, 316], [700, 324], [713, 328.5], [730, 327], [770, 319], [810, 307], [760, 305], [697, 308]],
  [[986, 238], [997, 225], [1017, 215.7], [1050, 210], [1080, 210], [1103, 213], [1137, 213], [1155, 221], [1161, 233], [1157, 245], [1137, 250], [1117, 247.7], [1108, 237], [1100, 230], [1085, 228], [1040, 240], [986, 238]],
  [[1188, 172], [1203, 182], [1223, 190], [1243, 195], [1263, 197], [1270, 192], [1250, 160], [1188, 172]],
  [[1248, 219], [1255, 218.5], [1267, 227], [1272, 242], [1268, 258], [1257, 266], [1252, 260], [1256, 242], [1248, 228], [1248, 219]],
  [[1284, 281], [1263, 287], [1247, 297], [1223, 310], [1207, 324], [1240, 340], [1290, 310], [1284, 281]],
  [[1056, 340], [1070, 336.5], [1090, 334.5], [1080, 342], [1056, 340]],
  [[1102, 260], [1108, 256], [1108, 262], [1104, 266], [1102, 260]],
  [[682, 280], [686, 274], [690, 275], [688, 284], [682, 280]],
];
const orange: P[][] = [
  [[602, 325], [611.7, 338], [620, 350], [633, 352.7], [670, 349.5], [703, 347], [720, 350], [753, 347], [787, 343], [820, 336.7], [850, 328], [870, 321.7], [887, 313], [902, 298], [950, 285], [1083, 270], [1100, 271.7], [1113, 267.7], [1127, 273], [1135, 288], [1143, 298], [1158, 304], [1173, 298], [1183, 288], [1200, 283], [1225, 270], [1247, 272], [1243, 283], [1227, 295], [1203, 308], [1188, 316.7], [1187, 330], [1160, 345], [1128, 334], [1120, 325], [1103, 317.7], [1083, 316], [1050, 322], [1017, 330], [990, 340], [975, 353], [900, 385], [700, 410], [606, 402], [607.7, 371.7], [603, 363], [580, 362], [563, 361], [570, 340], [602, 325]],
  [[1023, 170], [1040, 182], [1067, 187.7], [1097, 190], [1127, 186.7], [1147, 180], [1154, 170], [1100, 165], [1023, 170]],
  [[1187, 208], [1190, 202], [1203, 200], [1220, 202], [1233, 208], [1239, 217], [1220, 225], [1194, 220], [1187, 208]],
  [[686, 269], [687, 258], [703, 250], [723, 243], [740, 240], [787, 242], [820, 243], [850, 245], [882, 247], [850, 256], [730, 265], [686, 269]],
];

const Scene = styled.svg`
  position: absolute;
  inset: 0;
  width: 100%;
  height: 100%;
`;
const Part = () => (
  <Scene viewBox="424 97 856 383" preserveAspectRatio="xMidYMid meet" role="img" aria-label="Meshed connecting link coloured by safety factor">
    <defs>
      <clipPath id="solid"><path d={body + leftHole + rightHole + slot} clipRule="evenodd" /></clipPath>
    </defs>
    <g clipPath="url(#solid)">
      <path d={body} fill="#00ac06" />
      {orange.map((p, i) => <path key={i} d={smooth(p)} fill="#b27a0a" />)}
      {blue.map((p, i) => <path key={i} d={smooth(p)} fill="#0303ac" />)}
      <path d={mesh} fill="none" stroke="#000" strokeOpacity=".62" strokeWidth=".8" />
    </g>
    <path d={body + leftHole + rightHole + slot} fill="none" stroke="#101010" strokeWidth=".8" />
  </Scene>
);

const Viewport = styled.section`
  position: relative;
  flex: 1;
  min-height: 300px;
  overflow: hidden;
  border: solid #6d7078;
  border-width: 1px 0 0 1px;
  background: linear-gradient(#6d8bdf, #92a7e6 25%, #b1c1ee 50%, #d9e1f7 78%, #fff);
`;
const Caption = styled.div`
  position: absolute;
  left: 11px;
  top: 10px;
  font: 8px/11px ${UI};
`;
const Legend = styled.svg`
  position: absolute;
  left: 10px;
  top: 63px;
  font: 8px ${UI};
`;
const Brand = styled.div`
  position: absolute;
  right: 14px;
  top: 14px;
  color: #fff;
  text-align: right;
  font: 12px/16px ${UI};
  strong { display: block; font: 700 17px/17px ${NARROW}; }
`;
const Flag = styled.svg<{ $x: number; $y: number }>`
  position: absolute;
  left: ${p => p.$x}px;
  top: ${p => p.$y}px;
  font: 8px ${UI};
`;
const Triad = styled.svg`
  position: absolute;
  right: 0;
  bottom: 49px;
  font: 8px ${UI};
`;
const Ruler = styled.svg`
  position: absolute;
  left: 38%;
  bottom: 9px;
  font: 8px ${UI};
`;

const Graphics = () => (
  <Viewport>
    <Part />
    <Caption>
      <strong>A: Static Structural</strong><br />Safety Factor<br />Type: Safety Factor<br />11/19/2025 10:16 AM
    </Caption>
    <Legend width="80" height="64" viewBox="434 160 80 64">
      <rect x="435.500" y="166.500" width="10" height="13" fill="#00f" stroke="#111" strokeWidth=".8" />
      <rect x="435.500" y="179.500" width="10" height="14" fill="#0f0" stroke="#111" strokeWidth=".8" />
      <rect x="435.500" y="193.500" width="10" height="11" fill="#ffa412" stroke="#111" strokeWidth=".8" />
      <rect x="435.500" y="204.500" width="10" height="2" fill="#ffe0a0" stroke="#111" strokeWidth=".8" />
      <rect x="435.500" y="206.500" width="10" height="13" fill="#f00" stroke="#111" strokeWidth=".8" />
      <g fill="#111">
        <text x="452" y="169" fontWeight="700">15 Max</text>
        <text x="452" y="182">10</text>
        <text x="452" y="195">5</text>
        <text x="452" y="207" fontWeight="700">1.5491 Min</text>
      </g>
    </Legend>
    <Flag $x={147} $y={149} width="46" height="22" viewBox="571 246 46 22">
      <path d="M572.500 246.500h22l5 6-5 6h-22z" fill="#f00404" stroke="#5a0808" strokeWidth=".8" />
      <text x="575" y="256" fill="#fff">Max</text>
      <path d="M609 254A5.500 5.500 0 1 0 610.500 260" fill="none" stroke="#dfe3f4" strokeWidth="3.600" />
      <path d="M609 254A5.500 5.500 0 1 0 610.500 260" fill="none" stroke="#0a0a14" strokeWidth="2" />
      <path d="M605 258.500h5" stroke="#dfe3f4" strokeWidth="3" />
      <path d="M605 258.500h5" stroke="#0a0a14" strokeWidth="1.500" />
      <path d="M608.500 255.500l6 2.500-4.500 3.500z" fill="#0a0a14" />
    </Flag>
    <Flag $x={634} $y={176} width="32" height="14" viewBox="1058 273 32 14">
      <path d="M1059.500 273.500h19l5 6-5 6h-19z" fill="#0404f0" stroke="#08085a" strokeWidth=".8" />
      <path d="M1084 279.500h6" stroke="#111" />
      <text x="1062" y="283" fill="#fff">Min</text>
    </Flag>
    <Brand><strong>ANSYS</strong>R18.1</Brand>
    <Ruler width="240" height="32" viewBox="750 439 240 32">
      <rect x="759" y="449.500" width="187" height="6" fill="#fff" stroke="#111" />
      <path d="M759 449h47v7h-47zM852 449h47v7h-47z" fill="#000" />
      <g fill="#111" textAnchor="middle">
        <text x="759" y="447">0.00</text>
        <text x="852" y="447">50.00</text>
        <text x="935" y="447" textAnchor="start">100.00 (mm)</text>
        <text x="805" y="466">25.00</text>
        <text x="899" y="466">75.00</text>
      </g>
    </Ruler>
    <Triad width="70" height="70" viewBox="1210 361 70 70">
      <path d="M1218.500 422V384" stroke="#0b6e12" strokeWidth="2.500" />
      <path d="M1218.500 377l4.500 11h-9z" fill="#0b7a12" />
      <path d="M1220 423.500h36" stroke="#b81111" strokeWidth="2.500" />
      <path d="M1265 423.500l-11 4.500v-9z" fill="#b81111" />
      <circle cx="1218.500" cy="423.500" r="4.700" fill="#07077e" />
      <circle cx="1240" cy="401.500" r="4.500" fill="#12a7a7" />
      <circle cx="1239" cy="400" r="1.500" fill="#5ce0dc" />
      <text x="1218" y="370" fill="#2d9a3a">Y</text>
      <text x="1271" y="424" fill="#d43a3a">X</text>
    </Triad>
  </Viewport>
);

const ViewTabs = styled.div`
  display: flex;
  height: 13px;
  background: #f0f0f0;
  border: solid #222;
  border-width: 1px 0 1px 1px;
`;
const ViewTab = styled.button<{ $w: number; $on?: boolean }>`
  width: ${p => p.$w}px;
  height: 11px;
  background: #fff;
  font: ${p => (p.$on ? `700 8px/11px ${STRONG}` : `400 8px/11px ${UI}`)};
`;
const Slant = ({ d }: { d: string }) => (
  <svg width="6" height="11" viewBox="0 0 6 11" aria-hidden="true">
    <rect width="6" height="11" fill="#fff" />
    <path d={d} fill="none" stroke="#222" />
  </svg>
);
const ViewArea = styled.div`
  flex: 1;
  display: flex;
  flex-direction: column;
`;

const Lower = styled.div`
  display: grid;
  grid-template-columns: minmax(0, 503fr) minmax(0, 350fr);
  gap: 4px;
  height: 192px;
`;
const GraphPanel = styled(Panel)`
  background: #f6f6f6;
`;
const GraphBar = styled(Bar)`
  height: 17px;
  border-bottom: 0;
`;
const Chart = styled.svg`
  flex: 1;
  width: 100%;
  min-height: 0;
  background: #fff;
  font: 8px ${UI};
`;
const GraphTabs = styled.div`
  display: flex;
  height: 15px;
  padding-left: 2px;
  border-top: 1px solid #ddd;
`;
const GraphTab = styled.button<{ $w: number; $on?: boolean }>`
  width: ${p => p.$w}px;
  height: 13px;
  border-bottom: 1px solid #999;
  background: ${p => (p.$on ? '#fff' : 'none')};
  border-right: ${p => (p.$on ? '1px solid #999' : 0)};
  font: ${p => (p.$on ? 700 : 400)} 8px/12px ${UI};
`;
const xs = ['0.', '0.125', '0.25', '0.375', '0.5', '0.625', '0.75', '0.875', '1.'];
const ys: [string, number][] = [['15.', 544], ['12.5', 558], ['10.', 573], ['7.5', 587], ['5.', 601], ['1.5491', 622]];

const Graph = () => (
  <GraphPanel>
    <PanelHead $tall><PanelTitle>Graph</PanelTitle><PinButton /></PanelHead>
    <GraphBar>
      <Grip $w={3} />
      <BarLabel $w={45} as="span">Animation</BarLabel>
      <T i="play" w={14} /><T i="stop" on /><Sep $w={4} />
      <T i="barsG" w={16} on /><T i="bars" w={16} /><Sep $w={4} />
      <T i="bulb" /><Space $w={2} />
      <Combo value="10 Frames" w={92} label="Frames" /><Space $w={4} />
      <Combo value="2 Sec (Auto)" w={92} label="Duration" />
      <Sep $w={7} /><T i="saveVideo" /><Sep $w={4} />
      <T i="zoomPlay" w={16} /><T i="grid" w={16} /><Sep $w={6} />
      <T i="cyclesDim" dim />
      <Tool $w={34} $dim>3 Cycles</Tool>
    </GraphBar>
    <Chart viewBox="424 527 502 146" preserveAspectRatio="xMinYMid meet" role="img" aria-label="Safety factor over time">
      <path d="M463 543.500h449M463 621.500h449M468.500 543v84" stroke="#b4b4b4" fill="none" />
      {ys.map(([t, y]) => (
        <g key={t}>
          <path d={`M463 ${y - 0.5}h5`} stroke="#b4b4b4" />
          <text x="460" y={y + 3} textAnchor="end" fill="#222">{t}</text>
        </g>
      ))}
      {xs.map((t, i) => (
        <g key={t}>
          <path d={`M${Math.round(468 + i * 55.5) + 0.5} 622v4`} stroke="#b4b4b4" />
          <text x={468 + i * 55.2} y="635" textAnchor="middle" fill="#222">{t}</text>
        </g>
      ))}
      <path d="M912 540v82" stroke="#000" strokeWidth="2" />
      <text x="909" y="537" textAnchor="middle" fontWeight="700">1.</text>
      <text x="690" y="652" textAnchor="middle" fontWeight="700">[s]</text>
      <rect x="468" y="657.500" width="444" height="10" fill="#f0f0f0" stroke="#b4b4b4" />
      <text x="690" y="666" textAnchor="middle">1</text>
    </Chart>
    <GraphTabs>
      <svg width="15" height="13" viewBox="0 0 15 13" aria-hidden="true"><path d="M0 0l12 12.500h3" fill="none" stroke="#999" /></svg>
      <GraphTab $w={34}>Messages</GraphTab>
      <svg width="7" height="13" viewBox="0 0 7 13" aria-hidden="true"><path d="M0 6l4 6.500h3" fill="#fff" stroke="#999" /></svg>
      <GraphTab $w={26} $on>Graph</GraphTab>
    </GraphTabs>
  </GraphPanel>
);

const DataPanel = styled(Panel)`
  background: #a0a0a0;
`;
const DataTable = styled.table`
  width: 153px;
  border-collapse: collapse;
  table-layout: fixed;
  background: #f0f0ee;
  td, th {
    height: 11px;
    padding: 0 0 0 2px;
    border: solid #b0b0b0;
    border-width: 0 1px 1px 0;
    font: 8px/10px ${UI};
    text-align: left;
    white-space: nowrap;
  }
  th { height: 12px; }
  label { display: flex; align-items: center; gap: 3px; }
`;
const SeriesName = styled.span<{ $c: string }>`
  font-family: ${STRONG};
  color: ${p => p.$c};
`;
const SeriesTick = styled.input`
  appearance: none;
  flex: none;
  width: 9px;
  height: 9px;
  border: solid #777;
  border-width: 1px 0 0 1px;
  background: #fff;
  display: grid;
  place-items: center;
  &:checked::before {
    content: '';
    width: 5px;
    height: 3px;
    border: solid #111;
    border-width: 0 0 1px 1px;
    transform: rotate(-45deg);
  }
`;
const Tabular = () => (
  <DataPanel>
    <PanelHead $tall><PanelTitle>Tabular Data</PanelTitle><PinButton /></PanelHead>
    <DataTable>
      <colgroup><col width="10" /><col width="34" /><col width="54" /><col width="55" /></colgroup>
      <thead>
        <tr>
          <th />
          <th>Time [s]</th>
          <th><label><SeriesTick type="checkbox" defaultChecked /><SeriesName $c="#b3202c">Minimum</SeriesName></label></th>
          <th><label><SeriesTick type="checkbox" defaultChecked /><SeriesName $c="#2e9a34">Maximum</SeriesName></label></th>
        </tr>
      </thead>
      <tbody>
        <tr><td>1</td><td>1.</td><td>1.5491</td><td>15.</td></tr>
      </tbody>
    </DataTable>
  </DataPanel>
);

const StatusBar = styled.footer`
  display: grid;
  grid-template-columns: 346px 166px 140px minmax(0, 1fr) 293px 23px;
  column-gap: 1px;
  height: 14px;
  background: #fafafa;
`;
const Status = styled.div<{ $plain?: boolean }>`
  display: flex;
  align-items: center;
  gap: 1px;
  min-width: 0;
  padding-left: 1px;
  white-space: pre;
  background: #f0f0f0;
  border: solid #b4b4b4;
  border-width: ${p => (p.$plain ? 0 : '1px 0 0 1px')};
`;
const Units = styled.span`
  display: flex;
  gap: 10px;
`;

export default function App() {
  return (
    <>
      <GlobalStyle />
      <Shell>
        <TitleBar>
          <Icon name="app" size={13} />
          <TitleText>A : Static Structural - Mechanical [ANSYS Mechanical Enterprise]</TitleText>
          <WindowButton aria-label="Minimize"><svg width="8" height="8" viewBox="0 0 8 8"><path d="M1 4.500h6" stroke="#222" /></svg></WindowButton>
          <WindowButton aria-label="Restore"><svg width="8" height="8" viewBox="0 0 8 8"><path d="M1 2.500h4.500v4.500H1zM2.500 2.500V1H7v4.500H5.500" fill="none" stroke="#222" /></svg></WindowButton>
          <WindowButton aria-label="Close"><svg width="8" height="8" viewBox="0 0 8 8"><path d="M1 1l6 6M7 1L1 7" stroke="#222" /></svg></WindowButton>
        </TitleBar>
        <Toolbars />
        <Main>
          <Column>
            <Outline />
            <Details />
          </Column>
          <Column>
            <ViewArea>
              <Graphics />
              <ViewTabs>
                <Slant d="M1 0l4 11" />
                <ViewTab $w={40} $on>Geometry</ViewTab>
                <Slant d="M1 11L5 0" />
                <ViewTab $w={48}>Print Preview</ViewTab>
                <Slant d="M1 11L5 0M1 0l4 11" />
                <ViewTab $w={54}>Report Preview</ViewTab>
                <Slant d="M1 11L5 0" />
              </ViewTabs>
            </ViewArea>
            <Lower>
              <Graph />
              <Tabular />
            </Lower>
          </Column>
        </Main>
        <StatusBar>
          <Status />
          <Status />
          <Status><Icon name="note" />No Messages</Status>
          <Status>No Selection</Status>
          <Status><Units><span>Metric (mm, kg, N, s, mV, mA)</span><span>Degrees</span><span>rad/s</span><span>Celsius</span></Units></Status>
          <Status $plain><svg width="21" height="12" viewBox="0 0 21 12"><path d="M12 12l9-9M16 12l5-5" stroke="#888" /></svg></Status>
        </StatusBar>
      </Shell>
    </>
  );
}
